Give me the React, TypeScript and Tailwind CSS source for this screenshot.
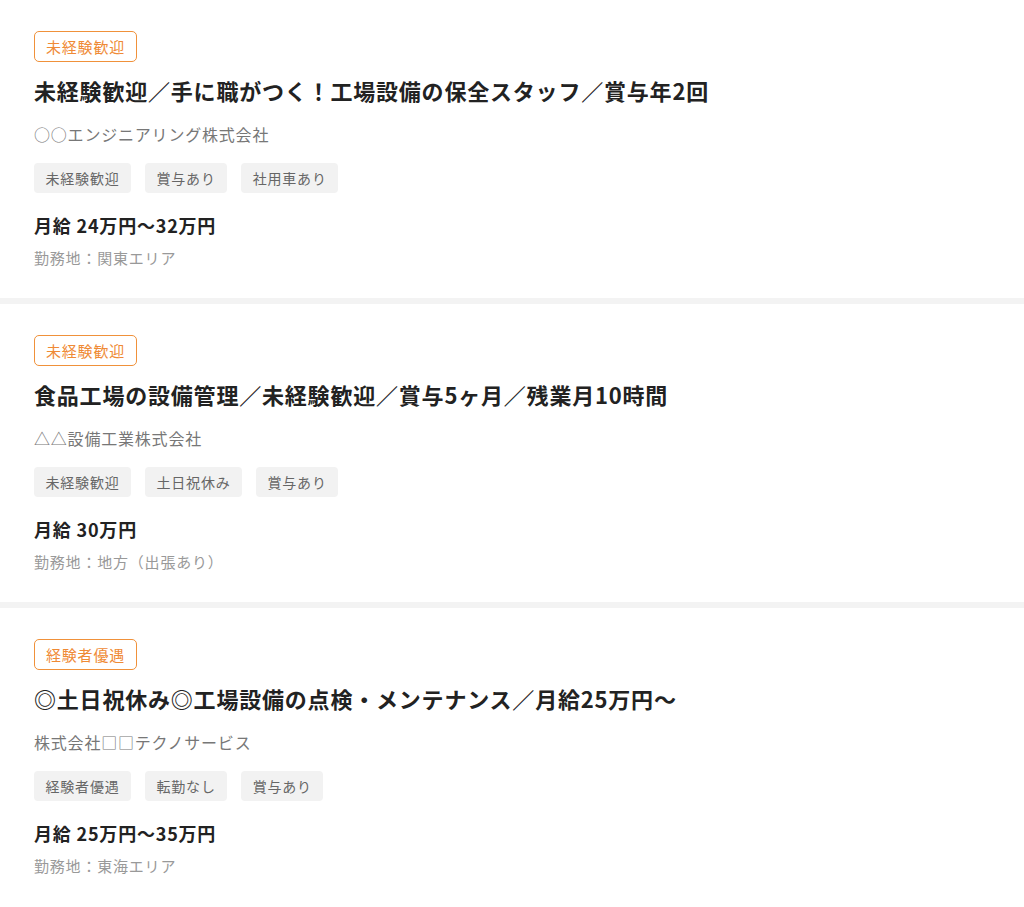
const jobs = [
  {
    badge: "未経験歓迎",
    title: "未経験歓迎／手に職がつく！工場設備の保全スタッフ／賞与年2回",
    company: "○○エンジニアリング株式会社",
    tags: ["未経験歓迎", "賞与あり", "社用車あり"],
    salary: "月給 24万円〜32万円",
    location: "勤務地：関東エリア",
  },
  {
    badge: "未経験歓迎",
    title: "食品工場の設備管理／未経験歓迎／賞与5ヶ月／残業月10時間",
    company: "△△設備工業株式会社",
    tags: ["未経験歓迎", "土日祝休み", "賞与あり"],
    salary: "月給 30万円",
    location: "勤務地：地方（出張あり）",
  },
  {
    badge: "経験者優遇",
    title: "◎土日祝休み◎工場設備の点検・メンテナンス／月給25万円〜",
    company: "株式会社□□テクノサービス",
    tags: ["経験者優遇", "転勤なし", "賞与あり"],
    salary: "月給 25万円〜35万円",
    location: "勤務地：東海エリア",
  },
];

export default function App() {
  return (
    <div className="min-h-[907px] bg-white tracking-[0.05em] font-['Noto_Sans_CJK_JP','Noto_Sans',sans-serif]">
      {jobs.map((job, i) => (
        <div
          key={i}
          className={`px-[34px] pt-[31px] pb-[29px] ${i < jobs.length - 1 ? "border-b-[6px] border-[#f3f3f3]" : ""}`}
        >
          <div className="flex">
            <span className="rounded-[5px] border border-[#f0913a] px-[11px] py-[4px] text-[15px] leading-[21px] text-[#ef8a35]">
              {job.badge}
            </span>
          </div>
          <h2 className="mt-[12px] text-[22px] font-bold leading-[32px] text-[#222]">{job.title}</h2>
          <p className="mt-[16px] text-[16px] leading-[24px] text-[#777]">{job.company}</p>
          <div className="mt-[17px] flex gap-[14px]">
            {job.tags.map((t) => (
              <span
                key={t}
                className="rounded-[4px] bg-[#f2f2f2] px-[11.5px] py-[5px] text-[14px] leading-[20px] text-[#666]"
              >
                {t}
              </span>
            ))}
          </div>
          <p className="mt-[19px] text-[18px] font-bold leading-[26px] text-[#222]">{job.salary}</p>
          <p className="mt-[9px] text-[15px] leading-[22px] text-[#999]">{job.location}</p>
        </div>
      ))}
    </div>
  );
}
